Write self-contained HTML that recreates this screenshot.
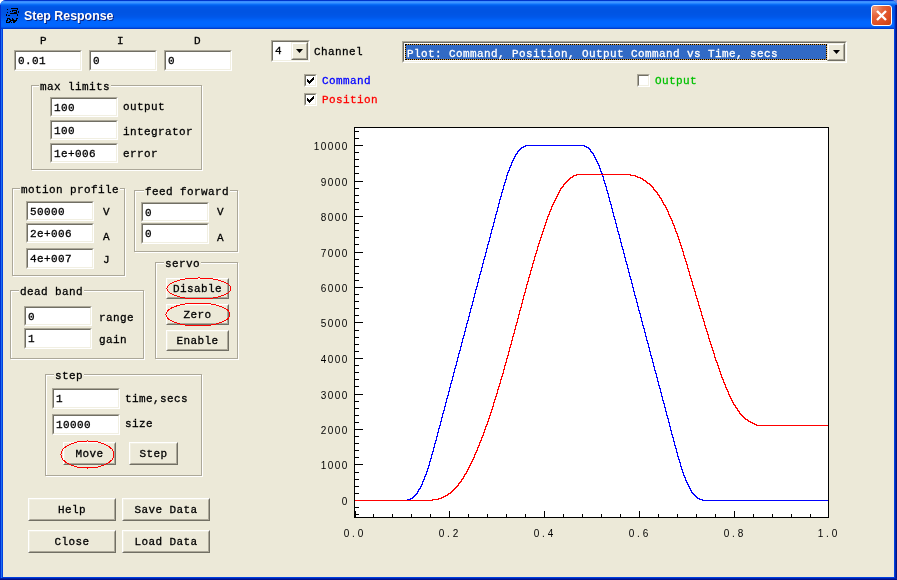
<!DOCTYPE html>
<html><head><meta charset="utf-8">
<style>
*{margin:0;padding:0;box-sizing:border-box}
html,body{width:897px;height:580px;overflow:hidden;background:#ECE9D8}
.lbl,.gl,.ed span,.bt,.ax,#ttl{will-change:transform}
body{position:relative;font-family:"Liberation Mono",monospace;font-size:11px;letter-spacing:0.4px;line-height:14px;color:#000;-webkit-text-stroke:0.3px currentColor}
.a{position:absolute}
#win{position:absolute;left:0;top:0;width:897px;height:580px;background:#0040E0;border-radius:6px 6px 0 0;overflow:hidden}
#bgl{position:absolute;left:0;top:0;width:12px;height:12px;background:#fff}
#bgr{position:absolute;left:885px;top:0;width:12px;height:12px;background:#7088E0}
#title{position:absolute;left:0;top:0;width:897px;height:29px;background:linear-gradient(to bottom,#0035CC 0px,#0035CC 1px,#3A8DFF 1px,#3A8DFF 2px,#3D95FF 2px,#3D95FF 3px,#2483FF 3px,#2483FF 4px,#0A6DF7 4px,#0A6DF7 5px,#0060EE 5px,#0060EE 6px,#0058E8 6px,#0058E8 7px,#0055E5 7px,#0055E5 8px,#0055E5 8px,#0055E5 9px,#0054E3 9px,#0054E3 10px,#0054E3 10px,#0054E3 11px,#0054E3 11px,#0054E3 12px,#0054E3 12px,#0054E3 13px,#0055E4 13px,#0055E4 14px,#0055E5 14px,#0055E5 15px,#0056E7 15px,#0056E7 16px,#0057E9 16px,#0057E9 17px,#0059EC 17px,#0059EC 18px,#005CF0 18px,#005CF0 19px,#0060F5 19px,#0060F5 20px,#0063FA 20px,#0063FA 21px,#0065FD 21px,#0065FD 22px,#0066FF 22px,#0066FF 23px,#0066FF 23px,#0066FF 24px,#0066FF 24px,#0066FF 25px,#0065FE 25px,#0065FE 26px,#0062FA 26px,#0062FA 27px,#0055E8 27px,#0055E8 28px,#003DD0 28px,#003DD0 29px)}
#client{position:absolute;left:3px;top:29px;width:891px;height:548px;background:#ECE9D8;overflow:hidden}
#lb0{position:absolute;left:0;top:5px;width:1px;height:575px;background:#0030D0}
#lb1{position:absolute;left:1px;top:29px;width:1px;height:551px;background:#1E6EF0}
#rb0{position:absolute;left:894px;top:6px;width:1px;height:23px;background:#0048E0}
#rb1{position:absolute;left:895px;top:5px;width:1px;height:575px;background:#0028B0}
#rb2{position:absolute;left:896px;top:5px;width:1px;height:575px;background:#001488}
#bb1{position:absolute;left:0;top:578px;width:897px;height:1px;background:#0020A8}
#bb2{position:absolute;left:0;top:579px;width:897px;height:1px;background:#001088}
#ttl{position:absolute;left:24px;top:9px;font-family:"Liberation Sans",sans-serif;font-weight:bold;font-size:12.4px;-webkit-text-stroke:0;color:#fff;text-shadow:1px 1px 0 #0A1F7A;letter-spacing:0px}
#close{position:absolute;left:871px;top:5px;width:21px;height:21px;border:1px solid #fff;border-radius:3px;background:radial-gradient(circle at 15% 10%,#F09A7A 0,#E5643A 35%,#DE4E22 70%,#C8400F 100%)}
/* edit */
.ed{position:absolute;background:#fff;border-top:1px solid #ACA899;border-left:1px solid #ACA899;border-right:1px solid #FFF;border-bottom:1px solid #FFF}
.ed::before{content:"";position:absolute;left:0;top:0;right:0;bottom:0;border-top:1px solid #716F64;border-left:1px solid #716F64;border-right:1px solid #F1EFE2;border-bottom:1px solid #F1EFE2}
.ed span{position:absolute;left:3px;top:3px;white-space:pre}
/* group */
.gb{position:absolute;border:1px solid #ACA899}
.gb::after{content:"";position:absolute;left:0;top:0;right:-2px;bottom:-2px;border:1px solid #fff;border-right-width:1px}
.gl{position:absolute;background:#ECE9D8;padding:0 1px;white-space:pre}
.lbl{position:absolute;white-space:pre}
/* button */
.bt{position:absolute;background:#ECE9D8;border-top:1px solid #fff;border-left:1px solid #fff;border-right:1px solid #716F64;border-bottom:1px solid #716F64;text-align:center;white-space:pre}
.bt::before{content:"";position:absolute;left:0;top:0;right:0;bottom:0;border-right:1px solid #ACA899;border-bottom:1px solid #ACA899;border-top:1px solid #F1EFE2;border-left:1px solid #F1EFE2}
.cb{position:absolute;width:13px;height:13px;background:#fff;border-top:1px solid #ACA899;border-left:1px solid #ACA899;border-right:1px solid #fff;border-bottom:1px solid #fff}
.cb::before{content:"";position:absolute;left:0;top:0;right:0;bottom:0;border-top:1px solid #716F64;border-left:1px solid #716F64;border-right:1px solid #F1EFE2;border-bottom:1px solid #F1EFE2}
.ax{position:absolute;width:7px;text-align:center;white-space:pre;font-family:"Liberation Sans",sans-serif;font-size:10px;letter-spacing:0;line-height:14px;-webkit-text-stroke:0}
</style></head><body>
<div id="bgl"></div><div id="bgr"></div>
<div id="win">
 <div id="title"></div>
 <div id="lb0"></div><div id="lb1"></div><div id="rb0"></div><div id="rb1"></div><div id="rb2"></div><div id="bb1"></div><div id="bb2"></div>
 <svg class="a" style="left:0;top:0" width="24" height="26" shape-rendering="crispEdges"><rect x="11" y="8" width="7" height="1" fill="#000"/><rect x="7" y="9" width="1" height="1" fill="#000"/><rect x="17" y="9" width="1" height="1" fill="#000"/><rect x="12" y="10" width="5" height="1" fill="#000"/><rect x="10" y="11" width="1" height="1" fill="#000"/><rect x="12" y="11" width="1" height="1" fill="#000"/><rect x="16" y="11" width="1" height="1" fill="#000"/><rect x="18" y="11" width="1" height="2" fill="#000"/><rect x="7" y="12" width="1" height="1" fill="#000"/><rect x="14" y="12" width="3" height="1" fill="#000"/><rect x="10" y="13" width="7" height="1" fill="#000"/><rect x="6" y="14" width="1" height="2" fill="#000"/><rect x="17" y="14" width="1" height="2" fill="#000"/><rect x="8" y="15" width="2" height="1" fill="#000"/><rect x="7" y="18" width="3" height="1" fill="#000"/><rect x="7" y="19" width="1" height="1" fill="#000"/><rect x="9" y="19" width="2" height="1" fill="#000"/><rect x="6" y="20" width="2" height="1" fill="#000"/><rect x="10" y="20" width="1" height="1" fill="#000"/><rect x="6" y="21" width="1" height="1" fill="#000"/><rect x="9" y="21" width="2" height="1" fill="#000"/><rect x="6" y="22" width="4" height="1" fill="#000"/><rect x="12" y="18" width="1" height="1" fill="#000"/><rect x="16" y="18" width="2" height="1" fill="#000"/><rect x="12" y="19" width="2" height="1" fill="#000"/><rect x="16" y="19" width="1" height="1" fill="#000"/><rect x="11" y="20" width="4" height="1" fill="#000"/><rect x="15" y="20" width="2" height="1" fill="#000"/><rect x="13" y="21" width="1" height="1" fill="#000"/><rect x="14" y="21" width="2" height="1" fill="#000"/><rect x="11" y="22" width="1" height="1" fill="#000"/><rect x="13" y="22" width="2" height="1" fill="#000"/></svg>
 <div id="ttl">Step Response</div>
 <div id="close"><svg width="19" height="19" style="position:absolute;left:0;top:0"><path d="M5 5L14 14M14 5L5 14" stroke="#fff" stroke-width="2.4"/></svg></div>
</div>
<div id="client"></div>

<div class="lbl" style="left:40px;top:34px">P</div>
<div class="lbl" style="left:117px;top:34px">I</div>
<div class="lbl" style="left:194px;top:34px">D</div>
<div class="ed" style="left:14px;top:50px;width:68px;height:21px"><span style="left:3px;top:3px">0.01</span></div>
<div class="ed" style="left:89px;top:50px;width:68px;height:21px"><span style="left:3px;top:3px">0</span></div>
<div class="ed" style="left:164px;top:50px;width:68px;height:21px"><span style="left:3px;top:3px">0</span></div>
<div class="a" style="left:32px;top:86px;width:171px;height:85px;border:1px solid #fff"></div>
<div class="a" style="left:31px;top:85px;width:171px;height:85px;border:1px solid #ACA899"></div>
<div class="gl" style="left:39px;top:80px">max limits</div>
<div class="ed" style="left:50px;top:97px;width:68px;height:20px"><span style="left:3px;top:3px">100</span></div>
<div class="lbl" style="left:123px;top:100px">output</div>
<div class="ed" style="left:50px;top:120px;width:68px;height:20px"><span style="left:3px;top:3px">100</span></div>
<div class="lbl" style="left:123px;top:125px">integrator</div>
<div class="ed" style="left:50px;top:143px;width:68px;height:20px"><span style="left:3px;top:3px">1e+006</span></div>
<div class="lbl" style="left:123px;top:147px">error</div>
<div class="a" style="left:13px;top:189px;width:113px;height:88px;border:1px solid #fff"></div>
<div class="a" style="left:12px;top:188px;width:113px;height:88px;border:1px solid #ACA899"></div>
<div class="gl" style="left:20px;top:183px">motion profile</div>
<div class="ed" style="left:26px;top:201px;width:68px;height:20px"><span style="left:3px;top:3px">50000</span></div>
<div class="lbl" style="left:103px;top:205px">V</div>
<div class="ed" style="left:26px;top:223px;width:68px;height:20px"><span style="left:3px;top:3px">2e+006</span></div>
<div class="lbl" style="left:103px;top:230px">A</div>
<div class="ed" style="left:26px;top:248px;width:68px;height:21px"><span style="left:3px;top:3px">4e+007</span></div>
<div class="lbl" style="left:103px;top:253px">J</div>
<div class="a" style="left:135px;top:191px;width:104px;height:62px;border:1px solid #fff"></div>
<div class="a" style="left:134px;top:190px;width:104px;height:62px;border:1px solid #ACA899"></div>
<div class="gl" style="left:144px;top:185px">feed forward</div>
<div class="ed" style="left:141px;top:202px;width:68px;height:20px"><span style="left:3px;top:3px">0</span></div>
<div class="lbl" style="left:217px;top:205px">V</div>
<div class="ed" style="left:141px;top:223px;width:68px;height:21px"><span style="left:3px;top:3px">0</span></div>
<div class="lbl" style="left:217px;top:231px">A</div>
<div class="a" style="left:156px;top:263px;width:83px;height:97px;border:1px solid #fff"></div>
<div class="a" style="left:155px;top:262px;width:83px;height:97px;border:1px solid #ACA899"></div>
<div class="gl" style="left:164px;top:257px">servo</div>
<div class="bt" style="left:166px;top:278px;width:63px;height:21px;line-height:20px">Disable</div>
<div class="bt" style="left:166px;top:304px;width:63px;height:21px;line-height:20px">Zero</div>
<div class="bt" style="left:166px;top:330px;width:63px;height:21px;line-height:20px">Enable</div>
<div class="a" style="left:11px;top:291px;width:134px;height:69px;border:1px solid #fff"></div>
<div class="a" style="left:10px;top:290px;width:134px;height:69px;border:1px solid #ACA899"></div>
<div class="gl" style="left:19px;top:285px">dead band</div>
<div class="ed" style="left:24px;top:306px;width:68px;height:20px"><span style="left:3px;top:3px">0</span></div>
<div class="lbl" style="left:99px;top:311px">range</div>
<div class="ed" style="left:24px;top:328px;width:68px;height:21px"><span style="left:3px;top:3px">1</span></div>
<div class="lbl" style="left:99px;top:333px">gain</div>
<div class="a" style="left:46px;top:375px;width:157px;height:102px;border:1px solid #fff"></div>
<div class="a" style="left:45px;top:374px;width:157px;height:102px;border:1px solid #ACA899"></div>
<div class="gl" style="left:54px;top:369px">step</div>
<div class="ed" style="left:52px;top:388px;width:68px;height:21px"><span style="left:3px;top:3px">1</span></div>
<div class="lbl" style="left:125px;top:392px">time,secs</div>
<div class="ed" style="left:52px;top:414px;width:68px;height:21px"><span style="left:3px;top:3px">10000</span></div>
<div class="lbl" style="left:125px;top:417px">size</div>
<div class="bt" style="left:63px;top:442px;width:53px;height:23px;line-height:22px">Move</div>
<div class="bt" style="left:129px;top:442px;width:49px;height:23px;line-height:22px">Step</div>
<div class="bt" style="left:28px;top:498px;width:88px;height:23px;line-height:22px">Help</div>
<div class="bt" style="left:122px;top:498px;width:88px;height:23px;line-height:22px">Save Data</div>
<div class="bt" style="left:28px;top:530px;width:88px;height:23px;line-height:22px">Close</div>
<div class="bt" style="left:122px;top:530px;width:88px;height:23px;line-height:22px">Load Data</div>
<svg class="a" style="left:165px;top:276.0px" width="68" height="25.0"><ellipse cx="34" cy="12.5" rx="32" ry="10.5" fill="none" stroke="#F00" stroke-width="1" shape-rendering="crispEdges"/></svg>
<svg class="a" style="left:164px;top:300.8px" width="68" height="27.0"><ellipse cx="34" cy="13.5" rx="32" ry="11.5" fill="none" stroke="#F00" stroke-width="1" shape-rendering="crispEdges"/></svg>
<svg class="a" style="left:59.0px;top:438.5px" width="57.0" height="31.0"><ellipse cx="28.5" cy="15.5" rx="26.5" ry="13.5" fill="none" stroke="#F00" stroke-width="1" shape-rendering="crispEdges"/></svg>
<div class="ed" style="left:271px;top:40px;width:39px;height:22px"><span style="left:3px;top:3px">4</span></div>
<div class="a" style="left:291px;top:42px;width:17px;height:18px;background:#ECE9D8;border-top:1px solid #F1EFE2;border-left:1px solid #F1EFE2;border-right:1px solid #716F64;border-bottom:1px solid #716F64"><div class="a" style="left:0;top:0;right:0;bottom:0;border-top:1px solid #fff;border-left:1px solid #fff;border-right:1px solid #ACA899;border-bottom:1px solid #ACA899"></div><svg class="a" style="left:4px;top:6px" width="8" height="5"><path d="M0 0H7L3.5 4Z" fill="#000"/></svg></div>
<div class="lbl" style="left:314px;top:45px">Channel</div>
<div class="ed" style="left:402px;top:41px;width:445px;height:22px"></div>
<div class="a" style="left:405px;top:44px;width:422px;height:16px;background:#316AC5;border:1px solid #D49A40"><div class="a" style="left:-1px;top:-1px;right:-1px;bottom:-1px;border:1px dotted #000"></div></div>
<div class="lbl" style="left:407px;top:47px;color:#fff">Plot: Command, Position, Output Command vs Time, secs</div>
<div class="a" style="left:827px;top:43px;width:18px;height:18px;background:#ECE9D8;border-top:1px solid #F1EFE2;border-left:1px solid #F1EFE2;border-right:1px solid #716F64;border-bottom:1px solid #716F64"><div class="a" style="left:0;top:0;right:0;bottom:0;border-top:1px solid #fff;border-left:1px solid #fff;border-right:1px solid #ACA899;border-bottom:1px solid #ACA899"></div><svg class="a" style="left:5px;top:6px" width="8" height="5"><path d="M0 0H7L3.5 4Z" fill="#000"/></svg></div>
<div class="cb" style="left:304px;top:74px"><svg width="13" height="13" style="position:absolute;left:-1px;top:-1px" shape-rendering="crispEdges"><path d="M9 3h1v1h-1zM8 4h2v1h-2zM3 5h1v1h-1zM7 5h3v1h-3zM3 6h2v1h-2zM6 6h3v1h-3zM3 7h5v1h-5zM4 8h3v1h-3zM5 9h1v1h-1z" fill="#000"/></svg></div>
<div class="lbl" style="left:322px;top:74px;color:#0000FF">Command</div>
<div class="cb" style="left:304px;top:93px"><svg width="13" height="13" style="position:absolute;left:-1px;top:-1px" shape-rendering="crispEdges"><path d="M9 3h1v1h-1zM8 4h2v1h-2zM3 5h1v1h-1zM7 5h3v1h-3zM3 6h2v1h-2zM6 6h3v1h-3zM3 7h5v1h-5zM4 8h3v1h-3zM5 9h1v1h-1z" fill="#000"/></svg></div>
<div class="lbl" style="left:322px;top:93px;color:#FF0000">Position</div>
<div class="cb" style="left:637px;top:74px"></div>
<div class="lbl" style="left:655px;top:74px;color:#00C000">Output</div>
<svg class="a" style="left:0;top:0" width="897" height="580" shape-rendering="crispEdges">
<rect x="354.5" y="127.5" width="474" height="390" fill="#fff" stroke="#000" stroke-width="1"/>
<path d="M355 514.5h4 M355 507.5h4 M355 500.5h8 M355 493.5h4 M355 486.5h4 M355 479.5h4 M355 472.5h4 M355 464.5h8 M355 457.5h4 M355 450.5h4 M355 443.5h4 M355 436.5h4 M355 429.5h8 M355 422.5h4 M355 415.5h4 M355 408.5h4 M355 401.5h4 M355 394.5h8 M355 386.5h4 M355 379.5h4 M355 372.5h4 M355 365.5h4 M355 358.5h8 M355 351.5h4 M355 344.5h4 M355 337.5h4 M355 330.5h4 M355 322.5h8 M355 315.5h4 M355 308.5h4 M355 301.5h4 M355 294.5h4 M355 287.5h8 M355 280.5h4 M355 273.5h4 M355 266.5h4 M355 259.5h4 M355 252.5h8 M355 244.5h4 M355 237.5h4 M355 230.5h4 M355 223.5h4 M355 216.5h8 M355 209.5h4 M355 202.5h4 M355 195.5h4 M355 188.5h4 M355 181.5h8 M355 173.5h4 M355 166.5h4 M355 159.5h4 M355 152.5h4 M355 145.5h8 M355 138.5h4 M355 131.5h4 M354.5 517v-6 M373.5 517v-3 M392.5 517v-3 M411.5 517v-3 M430.5 517v-3 M449.5 517v-6 M468.5 517v-3 M487.5 517v-3 M506.5 517v-3 M525.5 517v-3 M544.5 517v-6 M563.5 517v-3 M582.5 517v-3 M601.5 517v-3 M620.5 517v-3 M639.5 517v-6 M658.5 517v-3 M677.5 517v-3 M696.5 517v-3 M715.5 517v-3 M734.5 517v-6 M753.5 517v-3 M772.5 517v-3 M791.5 517v-3 M810.5 517v-3 M828.5 517v-6 M355.5 511v6" stroke="#000" stroke-width="1" fill="none"/>
<path d="M500 197h1v1h-1zM608 197h2v1h-2zM473 297h2v1h-2zM635 297h1v1h-1zM511 162h2v1h-2zM597 162h1v1h-1zM486 249h1v1h-1zM622 249h2v1h-2zM457 357h2v1h-2zM651 357h1v1h-1zM474 295h1v1h-1zM634 295h2v1h-2zM520 148h2v1h-2zM588 148h2v1h-2zM355 500h53v1h-53zM702 500h126v1h-126zM452 376h2v1h-2zM656 376h1v1h-1zM482 265h1v1h-1zM627 265h1v1h-1zM420 487h1v1h-1zM689 487h1v1h-1zM503 185h2v1h-2zM605 185h1v1h-1zM498 203h2v1h-2zM610 203h1v1h-1zM510 166h1v1h-1zM599 166h1v1h-1zM430 459h1v1h-1zM678 459h2v1h-2zM415 494h2v1h-2zM693 494h2v1h-2zM494 220h1v1h-1zM615 220h1v1h-1zM490 233h2v1h-2zM618 233h1v1h-1zM427 468h2v1h-2zM681 468h1v1h-1zM407 499h4v1h-4zM699 499h4v1h-4zM479 277h1v1h-1zM630 277h1v1h-1zM525 145h60v1h-60zM491 229h2v1h-2zM617 229h1v1h-1zM455 367h1v1h-1zM654 367h1v1h-1zM471 305h2v1h-2zM637 305h1v1h-1zM434 443h2v1h-2zM674 443h1v1h-1zM469 312h2v1h-2zM639 312h1v1h-1zM431 456h1v1h-1zM677 456h2v1h-2zM496 213h1v1h-1zM613 213h1v1h-1zM499 200h1v1h-1zM609 200h1v1h-1zM473 300h1v1h-1zM636 300h1v1h-1zM510 165h2v1h-2zM598 165h2v1h-2zM487 244h2v1h-2zM621 244h1v1h-1zM423 479h2v1h-2zM685 479h1v1h-1zM461 344h1v1h-1zM648 344h1v1h-1zM486 248h2v1h-2zM622 248h1v1h-1zM448 392h1v1h-1zM660 392h2v1h-2zM469 315h1v1h-1zM640 315h1v1h-1zM436 436h2v1h-2zM672 436h1v1h-1zM485 253h1v1h-1zM623 253h2v1h-2zM430 460h1v1h-1zM679 460h1v1h-1zM490 236h1v1h-1zM619 236h1v1h-1zM493 223h1v1h-1zM615 223h2v1h-2zM478 280h1v1h-1zM631 280h1v1h-1zM451 380h2v1h-2zM657 380h1v1h-1zM515 154h2v1h-2zM593 154h1v1h-1zM465 328h1v1h-1zM643 328h2v1h-2zM465 330h1v1h-1zM644 330h1v1h-1zM453 372h2v1h-2zM655 372h1v1h-1zM437 433h1v1h-1zM671 433h1v1h-1zM447 396h1v1h-1zM661 396h2v1h-2zM507 172h2v1h-2zM601 172h1v1h-1zM445 403h1v1h-1zM663 403h2v1h-2zM495 216h1v1h-1zM613 216h2v1h-2zM468 316h2v1h-2zM640 316h1v1h-1zM489 238h1v1h-1zM619 238h2v1h-2zM462 341h1v1h-1zM647 341h1v1h-1zM457 360h1v1h-1zM652 360h1v1h-1zM417 492h1v1h-1zM691 492h2v1h-2zM478 279h1v1h-1zM630 279h2v1h-2zM441 417h2v1h-2zM667 417h1v1h-1zM482 264h1v1h-1zM626 264h2v1h-2zM456 364h1v1h-1zM653 364h1v1h-1zM470 308h2v1h-2zM638 308h1v1h-1zM444 408h1v1h-1zM665 408h1v1h-1zM503 187h1v1h-1zM606 187h1v1h-1zM423 480h1v1h-1zM685 480h2v1h-2zM513 159h1v1h-1zM595 159h2v1h-2zM441 418h1v1h-1zM667 418h2v1h-2zM451 381h1v1h-1zM657 381h2v1h-2zM485 252h2v1h-2zM623 252h1v1h-1zM474 296h1v1h-1zM635 296h1v1h-1zM512 161h1v1h-1zM596 161h2v1h-2zM459 351h1v1h-1zM649 351h2v1h-2zM467 320h2v1h-2zM641 320h1v1h-1zM475 289h2v1h-2zM633 289h1v1h-1zM521 147h3v1h-3zM586 147h3v1h-3zM492 227h1v1h-1zM616 227h2v1h-2zM455 365h2v1h-2zM653 365h1v1h-1zM430 458h2v1h-2zM678 458h1v1h-1zM443 412h1v1h-1zM666 412h1v1h-1zM503 188h1v1h-1zM606 188h1v1h-1zM494 219h1v1h-1zM614 219h2v1h-2zM491 232h1v1h-1zM618 232h1v1h-1zM480 273h1v1h-1zM629 273h1v1h-1zM455 366h1v1h-1zM653 366h2v1h-2zM506 176h1v1h-1zM602 176h2v1h-2zM484 256h2v1h-2zM624 256h1v1h-1zM516 153h2v1h-2zM592 153h2v1h-2zM481 267h2v1h-2zM627 267h1v1h-1zM427 469h1v1h-1zM681 469h2v1h-2zM435 442h1v1h-1zM674 442h1v1h-1zM444 407h1v1h-1zM664 407h2v1h-2zM431 455h1v1h-1zM677 455h1v1h-1zM518 150h2v1h-2zM590 150h1v1h-1zM489 237h2v1h-2zM619 237h1v1h-1zM422 483h1v1h-1zM687 483h1v1h-1zM460 348h1v1h-1zM649 348h1v1h-1zM432 453h1v1h-1zM677 453h1v1h-1zM499 199h2v1h-2zM609 199h1v1h-1zM473 299h1v1h-1zM636 299h1v1h-1zM511 164h1v1h-1zM598 164h1v1h-1zM448 391h2v1h-2zM660 391h1v1h-1zM426 471h2v1h-2zM682 471h1v1h-1zM494 221h1v1h-1zM615 221h1v1h-1zM469 314h1v1h-1zM640 314h1v1h-1zM458 355h1v1h-1zM650 355h2v1h-2zM502 191h1v1h-1zM607 191h1v1h-1zM438 428h2v1h-2zM670 428h1v1h-1zM490 235h1v1h-1zM619 235h1v1h-1zM466 325h1v1h-1zM642 325h2v1h-2zM452 379h1v1h-1zM657 379h1v1h-1zM482 263h2v1h-2zM626 263h1v1h-1zM446 401h1v1h-1zM663 401h1v1h-1zM421 485h1v1h-1zM688 485h1v1h-1zM477 283h1v1h-1zM631 283h2v1h-2zM505 179h2v1h-2zM603 179h1v1h-1zM465 327h2v1h-2zM643 327h1v1h-1zM499 201h1v1h-1zM609 201h2v1h-2zM462 339h1v1h-1zM646 339h1v1h-1zM418 490h1v1h-1zM690 490h2v1h-2zM437 432h2v1h-2zM671 432h1v1h-1zM420 486h2v1h-2zM688 486h2v1h-2zM447 395h2v1h-2zM661 395h1v1h-1zM487 247h1v1h-1zM622 247h1v1h-1zM480 271h2v1h-2zM628 271h1v1h-1zM517 152h1v1h-1zM591 152h2v1h-2zM462 340h1v1h-1zM646 340h2v1h-2zM514 157h1v1h-1zM594 157h2v1h-2zM442 416h1v1h-1zM667 416h1v1h-1zM456 363h1v1h-1zM653 363h1v1h-1zM496 211h2v1h-2zM612 211h1v1h-1zM476 287h1v1h-1zM632 287h2v1h-2zM464 331h2v1h-2zM644 331h1v1h-1zM438 431h1v1h-1zM671 431h1v1h-1zM497 207h2v1h-2zM611 207h1v1h-1zM513 158h2v1h-2zM595 158h1v1h-1zM486 251h1v1h-1zM623 251h1v1h-1zM410 498h3v1h-3zM697 498h3v1h-3zM501 195h1v1h-1zM608 195h1v1h-1zM468 319h1v1h-1zM641 319h1v1h-1zM476 288h1v1h-1zM633 288h1v1h-1zM439 426h1v1h-1zM669 426h2v1h-2zM492 226h2v1h-2zM616 226h1v1h-1zM416 493h2v1h-2zM692 493h2v1h-2zM443 411h1v1h-1zM665 411h2v1h-2zM494 218h2v1h-2zM614 218h1v1h-1zM480 272h1v1h-1zM628 272h2v1h-2zM453 375h1v1h-1zM656 375h1v1h-1zM506 175h2v1h-2zM602 175h1v1h-1zM485 255h1v1h-1zM624 255h1v1h-1zM469 313h1v1h-1zM639 313h2v1h-2zM444 406h2v1h-2zM664 406h1v1h-1zM473 298h1v1h-1zM635 298h2v1h-2zM519 149h2v1h-2zM589 149h2v1h-2zM472 303h1v1h-1zM637 303h1v1h-1zM422 482h1v1h-1zM686 482h2v1h-2zM433 447h2v1h-2zM675 447h1v1h-1zM460 347h1v1h-1zM648 347h2v1h-2zM432 452h1v1h-1zM676 452h2v1h-2zM511 163h1v1h-1zM597 163h2v1h-2zM449 390h1v1h-1zM660 390h1v1h-1zM414 495h2v1h-2zM694 495h2v1h-2zM413 496h2v1h-2zM695 496h2v1h-2zM514 156h2v1h-2zM594 156h1v1h-1zM463 335h2v1h-2zM645 335h1v1h-1zM483 261h1v1h-1zM625 261h2v1h-2zM450 383h2v1h-2zM658 383h1v1h-1zM458 354h1v1h-1zM650 354h1v1h-1zM442 414h1v1h-1zM666 414h1v1h-1zM502 190h1v1h-1zM606 190h2v1h-2zM439 427h1v1h-1zM670 427h1v1h-1zM491 231h1v1h-1zM617 231h2v1h-2zM438 430h1v1h-1zM670 430h2v1h-2zM429 462h1v1h-1zM679 462h2v1h-2zM483 262h1v1h-1zM626 262h1v1h-1zM446 400h1v1h-1zM662 400h2v1h-2zM421 484h2v1h-2zM687 484h2v1h-2zM477 282h2v1h-2zM631 282h1v1h-1zM506 178h1v1h-1zM603 178h1v1h-1zM462 338h2v1h-2zM646 338h1v1h-1zM479 276h1v1h-1zM629 276h2v1h-2zM418 489h2v1h-2zM690 489h1v1h-1zM433 450h1v1h-1zM676 450h1v1h-1zM459 350h2v1h-2zM649 350h1v1h-1zM487 246h1v1h-1zM621 246h2v1h-2zM481 270h1v1h-1zM628 270h1v1h-1zM517 151h2v1h-2zM590 151h2v1h-2zM472 302h1v1h-1zM636 302h2v1h-2zM435 440h2v1h-2zM673 440h1v1h-1zM424 477h1v1h-1zM684 477h2v1h-2zM456 362h1v1h-1zM652 362h2v1h-2zM497 210h1v1h-1zM612 210h1v1h-1zM476 286h2v1h-2zM632 286h1v1h-1zM450 386h1v1h-1zM659 386h1v1h-1zM498 206h1v1h-1zM611 206h1v1h-1zM501 194h1v1h-1zM608 194h1v1h-1zM479 274h2v1h-2zM629 274h1v1h-1zM468 318h1v1h-1zM641 318h1v1h-1zM467 322h1v1h-1zM642 322h1v1h-1zM493 222h2v1h-2zM615 222h1v1h-1zM507 173h1v1h-1zM601 173h2v1h-2zM428 466h1v1h-1zM680 466h2v1h-2zM453 374h1v1h-1zM656 374h1v1h-1zM485 254h1v1h-1zM624 254h1v1h-1zM498 204h1v1h-1zM610 204h2v1h-2zM445 402h2v1h-2zM663 402h1v1h-1zM509 167h2v1h-2zM599 167h1v1h-1zM460 346h2v1h-2zM648 346h1v1h-1zM434 446h1v1h-1zM675 446h1v1h-1zM504 183h1v1h-1zM604 183h2v1h-2zM422 481h2v1h-2zM686 481h1v1h-1zM523 146h3v1h-3zM584 146h3v1h-3zM504 184h1v1h-1zM605 184h1v1h-1zM483 260h1v1h-1zM625 260h1v1h-1zM454 369h1v1h-1zM654 369h1v1h-1zM451 382h1v1h-1zM658 382h1v1h-1zM442 413h2v1h-2zM666 413h1v1h-1zM502 189h2v1h-2zM606 189h1v1h-1zM504 182h2v1h-2zM604 182h1v1h-1zM440 424h1v1h-1zM669 424h1v1h-1zM429 461h2v1h-2zM679 461h1v1h-1zM464 332h1v1h-1zM644 332h2v1h-2zM445 405h1v1h-1zM664 405h1v1h-1zM508 170h2v1h-2zM600 170h1v1h-1zM433 449h1v1h-1zM676 449h1v1h-1zM497 208h1v1h-1zM611 208h2v1h-2zM419 488h2v1h-2zM689 488h2v1h-2zM436 439h1v1h-1zM673 439h1v1h-1zM474 293h2v1h-2zM634 293h1v1h-1zM488 241h2v1h-2zM620 241h1v1h-1zM424 476h2v1h-2zM684 476h1v1h-1zM450 385h1v1h-1zM658 385h2v1h-2zM449 388h1v1h-1zM659 388h2v1h-2zM457 358h1v1h-1zM651 358h2v1h-2zM437 434h1v1h-1zM671 434h2v1h-2zM490 234h1v1h-1zM618 234h2v1h-2zM417 491h2v1h-2zM691 491h1v1h-1zM467 321h1v1h-1zM641 321h2v1h-2zM440 421h2v1h-2zM668 421h1v1h-1zM428 465h2v1h-2zM680 465h1v1h-1zM446 398h2v1h-2zM662 398h1v1h-1zM453 373h1v1h-1zM655 373h2v1h-2zM497 209h1v1h-1zM612 209h1v1h-1zM463 336h1v1h-1zM645 336h2v1h-2zM515 155h1v1h-1zM593 155h2v1h-2zM471 306h1v1h-1zM637 306h2v1h-2zM484 257h1v1h-1zM624 257h2v1h-2zM512 160h2v1h-2zM596 160h1v1h-1zM472 301h2v1h-2zM636 301h1v1h-1zM412 497h2v1h-2zM696 497h2v1h-2zM425 475h1v1h-1zM683 475h2v1h-2zM501 193h1v1h-1zM607 193h2v1h-2zM466 324h1v1h-1zM642 324h1v1h-1zM463 337h1v1h-1zM646 337h1v1h-1zM454 368h2v1h-2zM654 368h1v1h-1zM501 192h2v1h-2zM607 192h1v1h-1zM505 181h1v1h-1zM604 181h1v1h-1zM440 423h1v1h-1zM669 423h1v1h-1zM493 225h1v1h-1zM616 225h1v1h-1zM508 171h1v1h-1zM600 171h2v1h-2zM509 169h1v1h-1zM600 169h1v1h-1zM445 404h1v1h-1zM664 404h1v1h-1zM481 269h1v1h-1zM628 269h1v1h-1zM461 345h1v1h-1zM648 345h1v1h-1zM470 310h1v1h-1zM638 310h2v1h-2zM433 448h1v1h-1zM675 448h2v1h-2zM475 292h1v1h-1zM634 292h1v1h-1zM500 196h2v1h-2zM608 196h1v1h-1zM458 356h1v1h-1zM651 356h1v1h-1zM474 294h1v1h-1zM634 294h1v1h-1zM450 384h1v1h-1zM658 384h1v1h-1zM449 387h2v1h-2zM659 387h1v1h-1zM492 228h1v1h-1zM617 228h1v1h-1zM499 202h1v1h-1zM610 202h1v1h-1zM441 420h1v1h-1zM668 420h1v1h-1zM472 304h1v1h-1zM637 304h1v1h-1zM488 242h1v1h-1zM620 242h2v1h-2zM447 397h1v1h-1zM662 397h1v1h-1zM505 180h1v1h-1zM603 180h2v1h-2zM496 212h1v1h-1zM612 212h2v1h-2zM461 343h1v1h-1zM647 343h2v1h-2zM488 243h1v1h-1zM621 243h1v1h-1zM425 474h2v1h-2zM683 474h1v1h-1zM440 422h1v1h-1zM668 422h2v1h-2zM481 268h1v1h-1zM627 268h2v1h-2zM466 323h2v1h-2zM642 323h1v1h-1zM456 361h2v1h-2zM652 361h1v1h-1zM428 467h1v1h-1zM681 467h1v1h-1zM436 437h1v1h-1zM672 437h2v1h-2zM465 329h1v1h-1zM644 329h1v1h-1zM454 370h1v1h-1zM654 370h2v1h-2zM495 215h1v1h-1zM613 215h1v1h-1zM483 259h2v1h-2zM625 259h1v1h-1zM457 359h1v1h-1zM652 359h1v1h-1zM509 168h1v1h-1zM599 168h2v1h-2zM478 278h2v1h-2zM630 278h1v1h-1zM454 371h1v1h-1zM655 371h1v1h-1zM470 309h1v1h-1zM638 309h1v1h-1zM432 451h2v1h-2zM676 451h1v1h-1zM503 186h1v1h-1zM605 186h2v1h-2zM495 217h1v1h-1zM614 217h1v1h-1zM431 457h1v1h-1zM678 457h1v1h-1zM479 275h1v1h-1zM629 275h1v1h-1zM435 441h1v1h-1zM673 441h2v1h-2zM431 454h2v1h-2zM677 454h1v1h-1zM426 472h1v1h-1zM682 472h2v1h-2zM470 311h1v1h-1zM639 311h1v1h-1zM461 342h2v1h-2zM647 342h1v1h-1zM452 378h1v1h-1zM657 378h1v1h-1zM427 470h1v1h-1zM682 470h1v1h-1zM495 214h2v1h-2zM613 214h1v1h-1zM434 445h1v1h-1zM674 445h2v1h-2zM442 415h1v1h-1zM666 415h2v1h-2zM424 478h1v1h-1zM685 478h1v1h-1zM486 250h1v1h-1zM623 250h1v1h-1zM448 394h1v1h-1zM661 394h1v1h-1zM468 317h1v1h-1zM640 317h2v1h-2zM443 410h2v1h-2zM665 410h1v1h-1zM491 230h1v1h-1zM617 230h1v1h-1zM507 174h1v1h-1zM602 174h1v1h-1zM482 266h1v1h-1zM627 266h1v1h-1zM449 389h1v1h-1zM660 389h1v1h-1zM464 334h1v1h-1zM645 334h1v1h-1zM458 353h2v1h-2zM650 353h1v1h-1zM475 291h1v1h-1zM633 291h2v1h-2zM438 429h1v1h-1zM670 429h1v1h-1zM452 377h1v1h-1zM656 377h2v1h-2zM506 177h1v1h-1zM603 177h1v1h-1zM434 444h1v1h-1zM674 444h1v1h-1zM477 285h1v1h-1zM632 285h1v1h-1zM498 205h1v1h-1zM611 205h1v1h-1zM426 473h1v1h-1zM683 473h1v1h-1zM448 393h1v1h-1zM661 393h1v1h-1zM493 224h1v1h-1zM616 224h1v1h-1zM464 333h1v1h-1zM645 333h1v1h-1zM459 352h1v1h-1zM650 352h1v1h-1zM439 425h2v1h-2zM669 425h1v1h-1zM475 290h1v1h-1zM633 290h1v1h-1zM500 198h1v1h-1zM609 198h1v1h-1zM436 438h1v1h-1zM673 438h1v1h-1zM460 349h1v1h-1zM649 349h1v1h-1zM477 284h1v1h-1zM632 284h1v1h-1zM466 326h1v1h-1zM643 326h1v1h-1zM429 464h1v1h-1zM680 464h1v1h-1zM484 258h1v1h-1zM625 258h1v1h-1zM489 240h1v1h-1zM620 240h1v1h-1zM441 419h1v1h-1zM668 419h1v1h-1zM429 463h1v1h-1zM680 463h1v1h-1zM471 307h1v1h-1zM638 307h1v1h-1zM446 399h1v1h-1zM662 399h1v1h-1zM437 435h1v1h-1zM672 435h1v1h-1zM489 239h1v1h-1zM620 239h1v1h-1zM444 409h1v1h-1zM665 409h1v1h-1zM487 245h1v1h-1zM621 245h1v1h-1zM478 281h1v1h-1zM631 281h1v1h-1z" fill="#0000FF"/>
<path d="M525 291h1v1h-1zM694 291h2v1h-2zM432 499h7v1h-7zM490 412h2v1h-2zM739 412h1v1h-1zM528 277h2v1h-2zM690 277h1v1h-1zM556 196h2v1h-2zM659 196h1v1h-1zM576 174h55v1h-55zM500 382h1v1h-1zM723 382h2v1h-2zM568 179h2v1h-2zM642 179h2v1h-2zM515 325h2v1h-2zM704 325h2v1h-2zM503 369h2v1h-2zM719 369h1v1h-1zM541 234h2v1h-2zM677 234h1v1h-1zM532 265h1v1h-1zM687 265h1v1h-1zM524 292h2v1h-2zM695 292h1v1h-1zM469 465h2v1h-2zM547 217h1v1h-1zM670 217h1v1h-1zM506 359h1v1h-1zM715 359h1v1h-1zM493 404h1v1h-1zM733 404h2v1h-2zM485 428h1v1h-1zM496 393h2v1h-2zM728 393h1v1h-1zM481 439h1v1h-1zM561 187h2v1h-2zM652 187h2v1h-2zM458 483h2v1h-2zM519 313h1v1h-1zM701 313h1v1h-1zM530 271h1v1h-1zM688 271h2v1h-2zM461 479h2v1h-2zM512 338h1v1h-1zM708 338h2v1h-2zM545 222h2v1h-2zM672 222h1v1h-1zM488 420h1v1h-1zM747 420h2v1h-2zM486 424h2v1h-2zM754 424h3v1h-3zM486 425h1v1h-1zM756 425h72v1h-72zM506 360h1v1h-1zM715 360h2v1h-2zM355 500h78v1h-78zM535 255h1v1h-1zM683 255h2v1h-2zM512 339h1v1h-1zM709 339h1v1h-1zM441 497h3v1h-3zM514 329h2v1h-2zM706 329h1v1h-1zM491 410h1v1h-1zM737 410h2v1h-2zM548 214h2v1h-2zM668 214h2v1h-2zM467 469h2v1h-2zM524 293h1v1h-1zM695 293h1v1h-1zM517 318h2v1h-2zM702 318h2v1h-2zM453 489h2v1h-2zM489 417h1v1h-1zM743 417h2v1h-2zM518 317h1v1h-1zM702 317h1v1h-1zM540 237h2v1h-2zM678 237h1v1h-1zM522 302h1v1h-1zM698 302h1v1h-1zM487 422h1v1h-1zM750 422h3v1h-3zM456 486h2v1h-2zM544 225h2v1h-2zM673 225h2v1h-2zM553 203h1v1h-1zM663 203h1v1h-1zM538 244h1v1h-1zM680 244h1v1h-1zM498 386h2v1h-2zM725 386h1v1h-1zM535 253h2v1h-2zM683 253h1v1h-1zM504 365h2v1h-2zM717 365h2v1h-2zM510 345h1v1h-1zM711 345h1v1h-1zM528 280h1v1h-1zM691 280h1v1h-1zM473 457h2v1h-2zM463 476h2v1h-2zM539 241h1v1h-1zM679 241h1v1h-1zM538 245h1v1h-1zM680 245h2v1h-2zM519 312h1v1h-1zM701 312h1v1h-1zM498 387h1v1h-1zM725 387h2v1h-2zM523 296h1v1h-1zM696 296h1v1h-1zM476 450h2v1h-2zM488 419h1v1h-1zM745 419h3v1h-3zM513 333h2v1h-2zM707 333h1v1h-1zM572 176h2v1h-2zM635 176h3v1h-3zM498 388h1v1h-1zM726 388h1v1h-1zM489 416h1v1h-1zM742 416h2v1h-2zM525 290h1v1h-1zM694 290h1v1h-1zM516 322h2v1h-2zM704 322h1v1h-1zM551 206h2v1h-2zM665 206h1v1h-1zM493 402h2v1h-2zM732 402h2v1h-2zM531 269h1v1h-1zM688 269h1v1h-1zM563 185h1v1h-1zM650 185h2v1h-2zM522 301h1v1h-1zM697 301h2v1h-2zM506 358h2v1h-2zM715 358h1v1h-1zM493 403h1v1h-1zM733 403h1v1h-1zM485 427h1v1h-1zM497 392h1v1h-1zM728 392h1v1h-1zM481 438h1v1h-1zM562 186h2v1h-2zM651 186h2v1h-2zM512 337h1v1h-1zM708 337h1v1h-1zM526 285h1v1h-1zM692 285h2v1h-2zM492 408h1v1h-1zM736 408h2v1h-2zM512 336h2v1h-2zM708 336h1v1h-1zM560 188h2v1h-2zM653 188h1v1h-1zM495 396h2v1h-2zM729 396h2v1h-2zM563 184h2v1h-2zM649 184h2v1h-2zM468 468h1v1h-1zM564 183h2v1h-2zM647 183h3v1h-3zM501 376h2v1h-2zM721 376h1v1h-1zM479 442h2v1h-2zM492 407h1v1h-1zM735 407h2v1h-2zM530 272h1v1h-1zM689 272h1v1h-1zM532 263h2v1h-2zM686 263h1v1h-1zM518 316h1v1h-1zM702 316h1v1h-1zM509 347h2v1h-2zM711 347h2v1h-2zM539 242h1v1h-1zM679 242h2v1h-2zM505 364h1v1h-1zM717 364h1v1h-1zM543 229h1v1h-1zM675 229h1v1h-1zM532 264h1v1h-1zM686 264h2v1h-2zM526 284h2v1h-2zM692 284h1v1h-1zM546 221h1v1h-1zM672 221h1v1h-1zM499 385h1v1h-1zM725 385h1v1h-1zM538 243h2v1h-2zM680 243h1v1h-1zM548 215h1v1h-1zM669 215h1v1h-1zM447 494h2v1h-2zM471 461h2v1h-2zM559 191h1v1h-1zM655 191h2v1h-2zM573 175h4v1h-4zM630 175h6v1h-6zM522 300h1v1h-1zM697 300h1v1h-1zM510 344h2v1h-2zM710 344h2v1h-2zM539 240h2v1h-2zM679 240h1v1h-1zM464 475h1v1h-1zM559 190h2v1h-2zM654 190h2v1h-2zM519 311h1v1h-1zM700 311h2v1h-2zM451 491h2v1h-2zM525 288h2v1h-2zM693 288h2v1h-2zM514 332h1v1h-1zM707 332h1v1h-1zM517 320h1v1h-1zM703 320h1v1h-1zM489 415h2v1h-2zM741 415h2v1h-2zM502 374h1v1h-1zM720 374h2v1h-2zM542 232h1v1h-1zM676 232h1v1h-1zM550 209h2v1h-2zM666 209h2v1h-2zM517 321h1v1h-1zM703 321h2v1h-2zM552 205h1v1h-1zM664 205h2v1h-2zM508 353h1v1h-1zM713 353h2v1h-2zM494 401h1v1h-1zM732 401h1v1h-1zM531 268h1v1h-1zM687 268h2v1h-2zM555 198h2v1h-2zM660 198h2v1h-2zM566 181h2v1h-2zM645 181h2v1h-2zM459 482h2v1h-2zM497 391h1v1h-1zM727 391h2v1h-2zM534 256h2v1h-2zM684 256h1v1h-1zM475 452h2v1h-2zM484 430h1v1h-1zM496 395h1v1h-1zM729 395h1v1h-1zM504 368h1v1h-1zM718 368h2v1h-2zM514 331h1v1h-1zM706 331h2v1h-2zM513 335h1v1h-1zM708 335h1v1h-1zM528 278h1v1h-1zM690 278h2v1h-2zM519 310h2v1h-2zM700 310h1v1h-1zM488 418h2v1h-2zM744 418h2v1h-2zM499 383h2v1h-2zM724 383h1v1h-1zM454 488h2v1h-2zM565 182h2v1h-2zM646 182h2v1h-2zM533 262h1v1h-1zM686 262h1v1h-1zM480 441h1v1h-1zM492 406h2v1h-2zM735 406h1v1h-1zM466 471h2v1h-2zM510 346h1v1h-1zM711 346h1v1h-1zM518 315h1v1h-1zM701 315h2v1h-2zM478 445h2v1h-2zM517 319h1v1h-1zM703 319h1v1h-1zM530 273h1v1h-1zM689 273h1v1h-1zM507 357h1v1h-1zM714 357h2v1h-2zM443 496h3v1h-3zM505 363h1v1h-1zM717 363h1v1h-1zM543 228h2v1h-2zM674 228h2v1h-2zM505 362h2v1h-2zM716 362h2v1h-2zM546 220h1v1h-1zM671 220h2v1h-2zM483 433h1v1h-1zM499 384h1v1h-1zM724 384h2v1h-2zM520 307h2v1h-2zM699 307h1v1h-1zM508 351h2v1h-2zM713 351h1v1h-1zM547 216h2v1h-2zM669 216h2v1h-2zM448 493h3v1h-3zM472 460h1v1h-1zM511 341h1v1h-1zM709 341h2v1h-2zM487 421h2v1h-2zM748 421h3v1h-3zM522 299h2v1h-2zM697 299h1v1h-1zM438 498h4v1h-4zM536 251h1v1h-1zM682 251h2v1h-2zM567 180h2v1h-2zM643 180h3v1h-3zM464 474h2v1h-2zM560 189h1v1h-1zM653 189h2v1h-2zM494 400h1v1h-1zM731 400h2v1h-2zM553 202h2v1h-2zM662 202h2v1h-2zM490 413h1v1h-1zM739 413h2v1h-2zM462 478h2v1h-2zM543 230h1v1h-1zM675 230h1v1h-1zM551 207h1v1h-1zM665 207h2v1h-2zM526 287h1v1h-1zM693 287h1v1h-1zM496 394h1v1h-1zM728 394h2v1h-2zM536 252h1v1h-1zM683 252h1v1h-1zM504 366h1v1h-1zM718 366h1v1h-1zM500 379h2v1h-2zM722 379h2v1h-2zM542 231h2v1h-2zM675 231h2v1h-2zM557 195h1v1h-1zM658 195h2v1h-2zM523 298h1v1h-1zM696 298h2v1h-2zM487 423h1v1h-1zM752 423h3v1h-3zM470 463h2v1h-2zM558 193h1v1h-1zM657 193h1v1h-1zM460 481h2v1h-2zM520 308h1v1h-1zM699 308h2v1h-2zM484 429h2v1h-2zM534 259h1v1h-1zM685 259h1v1h-1zM521 303h2v1h-2zM698 303h1v1h-1zM513 334h1v1h-1zM707 334h2v1h-2zM570 177h3v1h-3zM637 177h4v1h-4zM520 309h1v1h-1zM700 309h1v1h-1zM455 487h2v1h-2zM549 213h1v1h-1zM668 213h1v1h-1zM530 270h2v1h-2zM688 270h1v1h-1zM467 470h1v1h-1zM554 200h2v1h-2zM661 200h2v1h-2zM501 377h1v1h-1zM721 377h2v1h-2zM479 444h1v1h-1zM491 409h2v1h-2zM737 409h1v1h-1zM557 194h2v1h-2zM657 194h2v1h-2zM507 356h1v1h-1zM714 356h1v1h-1zM483 432h2v1h-2zM495 397h1v1h-1zM730 397h1v1h-1zM569 178h2v1h-2zM640 178h3v1h-3zM521 306h1v1h-1zM699 306h1v1h-1zM491 411h1v1h-1zM738 411h2v1h-2zM508 354h1v1h-1zM714 354h1v1h-1zM546 219h2v1h-2zM671 219h1v1h-1zM536 250h2v1h-2zM682 250h1v1h-1zM527 282h1v1h-1zM692 282h1v1h-1zM494 399h2v1h-2zM731 399h1v1h-1zM503 371h1v1h-1zM719 371h2v1h-2zM463 477h1v1h-1zM465 473h2v1h-2zM533 261h1v1h-1zM685 261h2v1h-2zM477 447h2v1h-2zM509 350h1v1h-1zM712 350h2v1h-2zM523 297h1v1h-1zM696 297h1v1h-1zM540 239h1v1h-1zM678 239h2v1h-2zM471 462h1v1h-1zM558 192h2v1h-2zM656 192h2v1h-2zM547 218h1v1h-1zM670 218h2v1h-2zM534 258h1v1h-1zM684 258h2v1h-2zM525 289h1v1h-1zM694 289h1v1h-1zM474 454h2v1h-2zM549 211h2v1h-2zM667 211h2v1h-2zM495 398h1v1h-1zM730 398h2v1h-2zM500 381h1v1h-1zM723 381h1v1h-1zM537 246h2v1h-2zM681 246h1v1h-1zM527 281h2v1h-2zM691 281h2v1h-2zM549 212h1v1h-1zM668 212h1v1h-1zM445 495h3v1h-3zM479 443h1v1h-1zM502 373h2v1h-2zM720 373h1v1h-1zM450 492h2v1h-2zM482 435h2v1h-2zM511 340h2v1h-2zM709 340h1v1h-1zM544 227h1v1h-1zM674 227h1v1h-1zM537 249h1v1h-1zM682 249h1v1h-1zM509 348h1v1h-1zM712 348h1v1h-1zM466 472h1v1h-1zM533 260h2v1h-2zM685 260h1v1h-1zM515 327h1v1h-1zM705 327h1v1h-1zM478 446h1v1h-1zM515 328h1v1h-1zM705 328h2v1h-2zM540 238h1v1h-1zM678 238h1v1h-1zM552 204h2v1h-2zM663 204h2v1h-2zM542 233h1v1h-1zM676 233h2v1h-2zM550 210h1v1h-1zM667 210h1v1h-1zM457 485h2v1h-2zM503 372h1v1h-1zM720 372h1v1h-1zM523 295h2v1h-2zM695 295h2v1h-2zM528 279h1v1h-1zM691 279h1v1h-1zM544 226h1v1h-1zM674 226h1v1h-1zM515 326h1v1h-1zM705 326h1v1h-1zM502 375h1v1h-1zM721 375h1v1h-1zM500 380h1v1h-1zM723 380h1v1h-1zM490 414h1v1h-1zM740 414h2v1h-2zM477 449h1v1h-1zM556 197h1v1h-1zM659 197h2v1h-2zM521 305h1v1h-1zM698 305h2v1h-2zM485 426h2v1h-2zM481 437h2v1h-2zM507 355h2v1h-2zM714 355h1v1h-1zM470 464h1v1h-1zM537 248h1v1h-1zM681 248h2v1h-2zM511 343h1v1h-1zM710 343h1v1h-1zM468 467h2v1h-2zM527 283h1v1h-1zM692 283h1v1h-1zM541 236h1v1h-1zM677 236h2v1h-2zM524 294h1v1h-1zM695 294h1v1h-1zM452 490h2v1h-2zM534 257h1v1h-1zM684 257h1v1h-1zM501 378h1v1h-1zM722 378h1v1h-1zM551 208h1v1h-1zM666 208h1v1h-1zM493 405h1v1h-1zM734 405h2v1h-2zM477 448h1v1h-1zM531 267h2v1h-2zM687 267h1v1h-1zM497 390h1v1h-1zM727 390h1v1h-1zM504 367h1v1h-1zM718 367h1v1h-1zM497 389h2v1h-2zM726 389h2v1h-2zM537 247h1v1h-1zM681 247h1v1h-1zM518 314h2v1h-2zM701 314h1v1h-1zM545 224h1v1h-1zM673 224h1v1h-1zM480 440h2v1h-2zM516 324h1v1h-1zM704 324h1v1h-1zM472 459h2v1h-2zM554 201h1v1h-1zM662 201h1v1h-1zM526 286h1v1h-1zM693 286h1v1h-1zM514 330h1v1h-1zM706 330h1v1h-1zM529 274h2v1h-2zM689 274h1v1h-1zM532 266h1v1h-1zM687 266h1v1h-1zM545 223h1v1h-1zM672 223h2v1h-2zM535 254h1v1h-1zM683 254h1v1h-1zM529 276h1v1h-1zM690 276h1v1h-1zM476 451h1v1h-1zM516 323h1v1h-1zM704 323h1v1h-1zM509 349h1v1h-1zM712 349h1v1h-1zM555 199h1v1h-1zM661 199h1v1h-1zM529 275h1v1h-1zM689 275h2v1h-2zM521 304h1v1h-1zM698 304h1v1h-1zM475 453h1v1h-1zM508 352h1v1h-1zM713 352h1v1h-1zM484 431h1v1h-1zM483 434h1v1h-1zM511 342h1v1h-1zM710 342h1v1h-1zM474 456h1v1h-1zM503 370h1v1h-1zM719 370h1v1h-1zM541 235h1v1h-1zM677 235h1v1h-1zM469 466h1v1h-1zM458 484h1v1h-1zM461 480h1v1h-1zM506 361h1v1h-1zM716 361h1v1h-1zM474 455h1v1h-1zM473 458h1v1h-1zM482 436h1v1h-1z" fill="#FF0000"/>
</svg>
<div class="ax" style="left:341px;top:495px">0</div>
<div class="ax" style="left:320px;top:459px">1</div>
<div class="ax" style="left:327px;top:459px">0</div>
<div class="ax" style="left:334px;top:459px">0</div>
<div class="ax" style="left:341px;top:459px">0</div>
<div class="ax" style="left:320px;top:424px">2</div>
<div class="ax" style="left:327px;top:424px">0</div>
<div class="ax" style="left:334px;top:424px">0</div>
<div class="ax" style="left:341px;top:424px">0</div>
<div class="ax" style="left:320px;top:389px">3</div>
<div class="ax" style="left:327px;top:389px">0</div>
<div class="ax" style="left:334px;top:389px">0</div>
<div class="ax" style="left:341px;top:389px">0</div>
<div class="ax" style="left:320px;top:353px">4</div>
<div class="ax" style="left:327px;top:353px">0</div>
<div class="ax" style="left:334px;top:353px">0</div>
<div class="ax" style="left:341px;top:353px">0</div>
<div class="ax" style="left:320px;top:317px">5</div>
<div class="ax" style="left:327px;top:317px">0</div>
<div class="ax" style="left:334px;top:317px">0</div>
<div class="ax" style="left:341px;top:317px">0</div>
<div class="ax" style="left:320px;top:282px">6</div>
<div class="ax" style="left:327px;top:282px">0</div>
<div class="ax" style="left:334px;top:282px">0</div>
<div class="ax" style="left:341px;top:282px">0</div>
<div class="ax" style="left:320px;top:247px">7</div>
<div class="ax" style="left:327px;top:247px">0</div>
<div class="ax" style="left:334px;top:247px">0</div>
<div class="ax" style="left:341px;top:247px">0</div>
<div class="ax" style="left:320px;top:211px">8</div>
<div class="ax" style="left:327px;top:211px">0</div>
<div class="ax" style="left:334px;top:211px">0</div>
<div class="ax" style="left:341px;top:211px">0</div>
<div class="ax" style="left:320px;top:176px">9</div>
<div class="ax" style="left:327px;top:176px">0</div>
<div class="ax" style="left:334px;top:176px">0</div>
<div class="ax" style="left:341px;top:176px">0</div>
<div class="ax" style="left:313px;top:140px">1</div>
<div class="ax" style="left:320px;top:140px">0</div>
<div class="ax" style="left:327px;top:140px">0</div>
<div class="ax" style="left:334px;top:140px">0</div>
<div class="ax" style="left:341px;top:140px">0</div>
<div class="ax" style="left:343px;top:527px">0</div>
<div class="ax" style="left:350px;top:527px">.</div>
<div class="ax" style="left:357px;top:527px">0</div>
<div class="ax" style="left:438px;top:527px">0</div>
<div class="ax" style="left:445px;top:527px">.</div>
<div class="ax" style="left:452px;top:527px">2</div>
<div class="ax" style="left:533px;top:527px">0</div>
<div class="ax" style="left:540px;top:527px">.</div>
<div class="ax" style="left:547px;top:527px">4</div>
<div class="ax" style="left:628px;top:527px">0</div>
<div class="ax" style="left:635px;top:527px">.</div>
<div class="ax" style="left:642px;top:527px">6</div>
<div class="ax" style="left:723px;top:527px">0</div>
<div class="ax" style="left:730px;top:527px">.</div>
<div class="ax" style="left:737px;top:527px">8</div>
<div class="ax" style="left:817px;top:527px">1</div>
<div class="ax" style="left:824px;top:527px">.</div>
<div class="ax" style="left:831px;top:527px">0</div>
</body></html>
